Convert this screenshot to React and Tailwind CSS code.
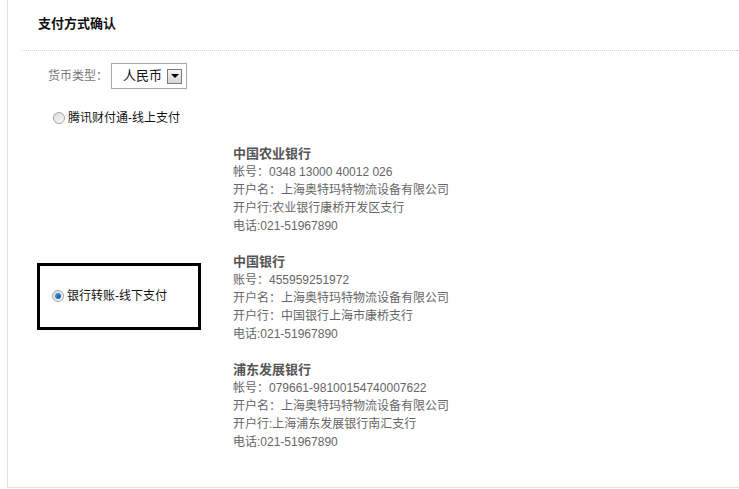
import React from 'react';

const banks = [
  {
    name: '中国农业银行',
    lines: ['帐号：0348 13000 40012 026', '开户名：上海奥特玛特物流设备有限公司', '开户行:农业银行康桥开发区支行', '电话:021-51967890'],
  },
  {
    name: '中国银行',
    lines: ['账号：455959251972', '开户名：上海奥特玛特物流设备有限公司', '开户行：中国银行上海市康桥支行', '电话:021-51967890'],
  },
  {
    name: '浦东发展银行',
    lines: ['帐号：079661-98100154740007622', '开户名：上海奥特玛特物流设备有限公司', '开户行:上海浦东发展银行南汇支行', '电话:021-51967890'],
  },
];

function Radio({ checked }) {
  return (
    <span className="relative inline-block w-[12px] h-[12px] rounded-full border border-[#a4a4a4] bg-gradient-to-br from-[#dcdcdc] to-[#fafafa] shrink-0">
      {checked && (
        <span className="absolute left-[2px] top-[2px] w-[6px] h-[6px] rounded-full bg-gradient-to-br from-[#4aa3e8] to-[#0a4f9c]" />
      )}
    </span>
  );
}

export default function App() {
  return (
    <div className="w-[739px] h-[489px] bg-white overflow-hidden font-['Liberation_Sans','Noto_Sans_CJK_SC',sans-serif]">
      <div className="ml-[7px] h-[488px] border-l border-b border-[#e3e3e3]">
        <div className="pl-[30px] pt-[15px] h-[50px]">
          <h1 className="text-[13px] leading-[18px] font-bold text-[#111]">支付方式确认</h1>
        </div>
        <div className="ml-[14px] border-t border-dotted border-[#cfcfcf]" />

        <div className="flex items-center pl-[40px] mt-[12px] h-[26px]">
          <span className="text-[12px] text-[#777]">货币类型：</span>
          <div className="ml-[3px] w-[76px] h-[26px] border border-[#a9a9a9] flex items-center pl-[11px]">
            <span className="text-[13px] text-[#111]">人民币</span>
            <span className="ml-[5px] w-[15px] h-[15px] border border-[#7a7a7a] bg-gradient-to-b from-[#f4f4f4] to-[#d6d6d6] flex items-center justify-center">
              <span className="w-0 h-0 border-l-[4px] border-r-[4px] border-t-[4px] border-l-transparent border-r-transparent border-t-black" />
            </span>
          </div>
        </div>

        <div className="flex items-center pl-[45px] mt-[20px] h-[18px] gap-[3px]">
          <Radio />
          <span className="text-[12px] text-[#111]">腾讯财付通-线上支付</span>
        </div>

        <div className="flex mt-[18px]">
          <div className="w-[225px] flex items-center pl-[29px] pb-[4px]">
            <div className="w-[164px] h-[67px] border-[3px] border-black flex items-center pl-[12px] gap-[3px]">
              <Radio checked />
              <span className="text-[12px] text-[#111]">银行转账-线下支付</span>
            </div>
          </div>
          <div className="flex flex-col gap-[18px]">
            {banks.map((b) => (
              <div key={b.name} className="text-[12px] leading-[18px] text-[#666]">
                <div className="font-bold text-[13px] text-[#555]">{b.name}</div>
                {b.lines.map((l) => (
                  <div key={l}>{l}</div>
                ))}
              </div>
            ))}
          </div>
        </div>
      </div>
    </div>
  );
}
